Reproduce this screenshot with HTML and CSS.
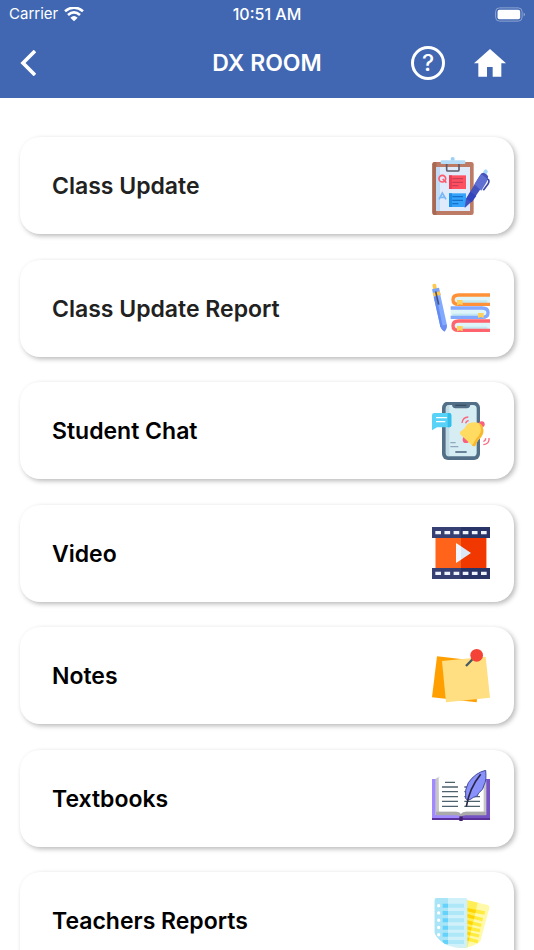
FILE: index.html
```html
<!DOCTYPE html>
<html lang="en">
<head>
    <meta charset="UTF-8">
    <meta name="viewport" content="width=device-width, initial-scale=1.0">
    <title>DX Room</title>
    <link rel="stylesheet" href="styles.css">
</head>
<body>
    <header class="header">
        <div class="status-bar">
            <div class="carrier">
                <span>Carrier</span>
                <svg class="wifi" viewBox="0 0 60 45" aria-hidden="true">
                    <path d="M3 13Q30-9 57 13M12 24Q30 8 48 24" fill="none" stroke="#fff" stroke-width="8"/>
                    <path d="M19 32Q30 22 41 32L30 43z" fill="#fff"/>
                </svg>
            </div>
            <span class="time">10:51 AM</span>
            <div class="battery-box">
                <svg class="battery" viewBox="0 0 96 45" aria-hidden="true">
                    <rect x="5" y="2" width="82" height="41" rx="12" fill="none" stroke="#8fa5d3" stroke-width="3"/>
                    <rect x="11" y="8" width="70" height="29" rx="6" fill="#fff"/>
                    <path d="M92 16q7 6 0 13z" fill="#9fb2da"/>
                </svg>
            </div>
        </div>
        <nav class="nav-bar">
            <div class="nav-side">
                <button type="button" class="nav-btn" aria-label="Back">
                    <svg class="back-icon" viewBox="0 0 48 78"><path d="M45 3L9 39l36 36" fill="none" stroke="#fff" stroke-width="11"/></svg>
                </button>
            </div>
            <h1 class="title">DX ROOM</h1>
            <div class="nav-side nav-right">
                <button type="button" class="nav-btn help" aria-label="Help">?</button>
                <button type="button" class="nav-btn home" aria-label="Home">
                    <svg class="home-icon" viewBox="0 0 96 84"><path d="M48 0L96 43H82V83H56V54H39V83H13V43H0z" fill="#fff"/></svg>
                </button>
            </div>
        </nav>
    </header>

    <main class="content">
        <ul class="menu">
            <li>
                <a class="card soft" href="#">
                    <span>Class Update</span>
                    <!-- clipboard with pen -->
                    <svg class="icon" viewBox="36 35 174 174" aria-hidden="true">
                        <rect x="37" y="50" width="124" height="159" rx="7" fill="#bd7b65"/>
                        <path d="M37 57q0-7 7-7h5v159h-5q-7 0-7-7z" fill="#a96851"/>
                        <rect x="48" y="65" width="102" height="132" fill="#dfeafb"/>
                        <path d="M48 65h12v132H48z" fill="#c1dbf7"/>
                        <path d="M80 56v17q0 4 4 4h29q4 0 4-4V56" fill="none" stroke="#5e5c69" stroke-width="5"/>
                        <circle cx="98" cy="41" r="6" fill="#9bcff6"/>
                        <rect x="62" y="45" width="74" height="11" rx="3" fill="#b5dcf8"/>
                        <circle cx="67" cy="100" r="10" fill="none" stroke="#ff5a6a" stroke-width="5"/>
                        <path d="M68 101l11 11" stroke="#ff5a6a" stroke-width="5"/>
                        <path d="M57 162l10-19 11 19M61 156h13" fill="none" stroke="#78b9f6" stroke-width="5"/>
                        <path d="M87 90h51v41H87z" fill="#ff5062"/>
                        <path d="M87 90h9v41h-9z" fill="#ee3c51"/>
                        <path d="M97 100h32M97 111h32M97 121h18" stroke="#c93d55" stroke-width="4"/>
                        <path d="M87 144h51v41H87z" fill="#35a3fb"/>
                        <path d="M87 144h9v41h-9z" fill="#198cec"/>
                        <path d="M97 154h32M97 165h32M97 175h18" stroke="#1670ca" stroke-width="4"/>
                        <path d="M189 80l6-8q7 0 9 7l-6 9z" fill="#a8d9fa"/>
                        <path d="M193 96l12 7q4 4-1 13l-14 19" fill="none" stroke="#3947a9" stroke-width="5"/>
                        <path d="M134 188l4-28 43-72q5-8 12-5l8 5q6 5 2 12l-46 67z" fill="#4453bd"/>
                        <path d="M163 117l15-24q6-8 12-2l10 8q4 5 0 11l-16 26z" fill="#6070d2"/>
                        <path d="M139 160l12-21 18 13-14 19z" fill="#3345bd"/>
                    </svg>
                </a>
            </li>
            <li>
                <a class="card soft" href="#">
                    <span>Class Update Report</span>
                    <!-- pen and pile of books -->
                    <svg class="icon" viewBox="36 30 174 174" aria-hidden="true">
                        <path d="M37 45q4-6 11-2l3 14-11 3z" fill="#ffc84c"/>
                        <path d="M36 58l21-5 5 22-21 4z" fill="#79a3fb"/>
                        <path d="M38 69l21-5 3 12-20 4z" fill="#ffc84c"/>
                        <path d="M41 80l20-5 20 91q0 10-7 18-9-4-13-14z" fill="#80a9ff"/>
                        <path d="M41 80l8-2 20 96-8-5z" fill="#658af0"/>
                        <path d="M60 168l20-4q2 12-7 21-9-6-13-17z" fill="#698df0"/>
                        <path d="M47 64l9 40" stroke="#46527c" stroke-width="5"/>
                        <path d="M210 76h-96q-15 0-15 14t15 14h96z" fill="#def5fa"/>
                        <path d="M115 91h87v10h-87z" fill="#c2e8f2"/>
                        <path d="M210 75h-94q-17 0-17 14t17 14h94" fill="none" stroke="#ff9138" stroke-width="10"/>
                        <path d="M92 114h90q15 0 15 14t-15 14H92z" fill="#def5fa"/>
                        <path d="M97 131h91v9H97z" fill="#c2e8f2"/>
                        <path d="M92 114h94q18 0 18 14t-18 14H92" fill="none" stroke="#82a8ff" stroke-width="10"/>
                        <path d="M210 153h-95q-16 0-16 14t16 14h95z" fill="#def5fa"/>
                        <path d="M115 170h87v9h-87z" fill="#c2e8f2"/>
                        <path d="M210 153h-94q-17 0-17 14t17 14h94" fill="none" stroke="#ff636e" stroke-width="10"/>
                        <path d="M111 90h17v16l-8-3-9 3zM174 129h17v15l-8-3-9 3zM111 168h17v16l-8-3-9 3z" fill="#ffd15c"/>
                    </svg>
                </a>
            </li>
            <li>
                <a class="card" href="#">
                    <span>Student Chat</span>
                    <!-- phone with bell -->
                    <svg class="icon" viewBox="36 29 174 174" aria-hidden="true">
                        <rect x="66" y="28" width="114" height="175" rx="18" fill="#526f87"/>
                        <path d="M88 38h8q2 10 10 10h35q8 0 10-10h8q11 0 11 11v132q0 11-11 11H88q-11 0-11-11V49q0-11 11-11z" fill="#d7edf4"/>
                        <path d="M78 47q1-9 10-9v154q-10-1-10-10z" fill="#c1dce6"/>
                        <path d="M106 39h33" stroke="#394f62" stroke-width="4"/>
                        <path d="M106 179h34" stroke="#536f87" stroke-width="5"/>
                        <path d="M91 151h16M91 163h24" stroke="#8ea9bd" stroke-width="4"/>
                        <path d="M43 62h45q6 0 6 6v31q0 6-6 6H51l-15 9V69q0-7 7-7z" fill="#58d2f7"/>
                        <path d="M83 62h5q6 0 6 6v31q0 6-6 6h-5z" fill="#33bdeb"/>
                        <path d="M48 76h33M48 88h28" stroke="#fff" stroke-width="4"/>
                        <circle cx="138" cy="142" r="10" fill="#f7617d"/>
                        <circle cx="185" cy="96" r="9" fill="#f7617d"/>
                        <!-- bell -->
                        <path d="M120 119q6-4 14-11 5-13 17-17 19-4 32 5 9 10 7 26-3 12-15 21-5 7-10 18-5 3-10-3l-33-31q-4-5-2-8z" fill="#ffdb61"/>
                        <path d="M176 92q13 4 14 21 1 16-15 30-5 8-9 17-5 4-11-2 6-3 9-12 4-8 11-14 15-18 1-40z" fill="#f8b82f"/>
                        <path d="M126 92q2-17 19-18M137 93q1-7 9-8M207 137q2 18-17 20M197 138q0 8-7 9" fill="none" stroke="#fa687f" stroke-width="4"/>
                    </svg>
                </a>
            </li>
            <li>
                <a class="card" href="#">
                    <span>Video</span>
                    <!-- film strip -->
                    <svg class="icon" viewBox="36 30 174 174" aria-hidden="true">
                        <path d="M45 66h156v96H45z" fill="#ffb08a"/>
                        <path d="M48 66h75v96H48z" fill="#ff641a"/>
                        <path d="M123 66h75v96h-75z" fill="#f03800"/>
                        <path d="M36 36h87v33H36zM36 159h87v33H36z" fill="#364073"/>
                        <path d="M123 36h87v33h-87zM123 159h87v33h-87z" fill="#293467"/>
                        <path d="M46 53h154M46 175h154" stroke="#edf2fb" stroke-width="10" stroke-dasharray="17 10.4"/>
                        <path d="M108 84v60l15-10V94z" fill="#f0f6ff"/>
                        <path d="M123 94l30 20-30 20z" fill="#dce7f8"/>
                    </svg>
                </a>
            </li>
            <li>
                <a class="card" href="#">
                    <span>Notes</span>
                    <!-- pinned notes -->
                    <svg class="icon" viewBox="36 29 174 174" aria-hidden="true">
                        <path d="M51 57l131 15-12 123L36 180z" fill="#ffa000"/>
                        <path d="M66 71l131-13 13 123-132 14z" fill="#ffdf82"/>
                        <path d="M138 86l26-27" stroke="#455a64" stroke-width="7"/>
                        <circle cx="170" cy="54" r="19" fill="#f44336"/>
                    </svg>
                </a>
            </li>
            <li>
                <a class="card" href="#">
                    <span>Textbooks</span>
                    <!-- open book with quill -->
                    <svg class="icon" viewBox="36 39 174 174" aria-hidden="true">
                        <path d="M36 66h87v120H36z" fill="#a18aff"/>
                        <path d="M123 66h87v120h-87z" fill="#7653c5"/>
                        <path d="M36 183h174v6H36z" fill="#5b329a"/>
                        <path d="M46 66l11-7h62v115H46zM127 174V67h62l10 3v104z" fill="#c6c6c6"/>
                        <path d="M56 59q5 7 12 7h46q9 0 9 8v99q-4-9-15-9H57z" fill="#fff"/>
                        <path d="M123 75q0-9 10-9h50q6 0 8-4v102h-53q-12 0-15 9z" fill="#fff"/>
                        <path d="M58 52h130v23H68q-10-4-10-16z" fill="#fff"/>
                        <path d="M48 164h60q12 0 15 9 3-9 15-9h59v11h-60q-9 0-14 6-5-6-14-6H48z" fill="#aaa"/>
                        <path d="M118 178h10v14h-10z" fill="#43216b"/>
                        <path d="M75 76h30M66 90h48M66 104h48M66 119h48M66 133h48M66 148h48M133 90h47M133 104h47M133 119h47M133 133h47M133 148h47" stroke="#4d626c" stroke-width="4"/>
                        <path d="M197 40q-31 7-52 37-12 21-8 48 8 9 23-4 14-1 16-13 15-10 16-24 8-12 5-44z" fill="#8991fa" stroke="#454b9f" stroke-width="3"/>
                        <path d="M182 52q-34 42-43 97" fill="none" stroke="#292645" stroke-width="5"/>
                    </svg>
                </a>
            </li>
            <li>
                <a class="card" href="#">
                    <span>Teachers Reports</span>
                    <!-- report sheets -->
                    <svg class="icon" viewBox="36 36 174 174" aria-hidden="true">
                        <clipPath id="sheets"><path d="M36 34h174v96a87 74 0 0 1-174 0z"/></clipPath>
                        <g clip-path="url(#sheets)">
                            <path d="M128 57l75 18q7 2 5 9l-34 126h-60z" fill="#fff9a9"/>
                            <path d="M128 57l45 11-31 137h-26z" fill="#ffee55"/>
                            <path d="M134 87l60 12M134 105l54 14M134 124l50 12M134 142l46 10M134 158l43 10M134 175l40 10" stroke="#ffec3f" stroke-width="10"/>
                            <path d="M134 87l33 8M134 105l29 8M134 124l24 6M134 142l20 5M134 158l17 4M134 175l13 4" stroke="#ffd400" stroke-width="10"/>
                            <rect x="44" y="54" width="98" height="165" rx="6" fill="#d0f1fa"/>
                            <path d="M50 54h34v165H44V60q0-6 6-6z" fill="#a9e5f7"/>
                            <path d="M68 77h64M68 99h64M68 121h64M68 143h64M68 164h64M68 186h64" stroke="#aee7f8" stroke-width="12"/>
                            <path d="M68 77h16M68 99h16M68 121h16M68 143h16M68 164h16M68 186h16" stroke="#65d2fb" stroke-width="12"/>
                            <path d="M56 77v110" stroke="#fff" stroke-width="10" stroke-linecap="round" stroke-dasharray="0 21.8"/>
                        </g>
                    </svg>
                </a>
            </li>
        </ul>
    </main>
</body>
</html>
```

FILE: styles.css
```css
* {
    box-sizing: border-box;
}

body {
    font-family: Inter, "Liberation Sans", sans-serif;
    margin: 0;
    height: 100vh;
    display: flex;
    flex-direction: column;
    background: #fff;
}

.header {
    flex: none;
    color: #fff;
    background: #4167b2;
}

/* status bar */
.status-bar {
    display: flex;
    align-items: center;
    height: 28px;
    padding: 0 9px;
    font-size: 15px;
    line-height: 20px;
}

.carrier,
.battery-box {
    flex: 1;
    display: flex;
    align-items: center;
    gap: 6px;
}

.battery-box {
    justify-content: flex-end;
}

.time {
    font-size: 16px;
    font-weight: 500;
}

.wifi {
    width: 20px;
    height: 15px;
}

.battery {
    width: 31px;
    height: 15px;
}

/* nav bar */
.nav-bar {
    display: flex;
    align-items: center;
    height: 70px;
    padding: 0 20px;
}

.nav-side {
    flex: 1;
    display: flex;
    align-items: center;
}

.nav-right {
    justify-content: flex-end;
    gap: 21px;
}

.nav-btn {
    display: flex;
    align-items: center;
    justify-content: center;
    padding: 0;
    border: 0;
    background: none;
    color: #fff;
    font-family: inherit;
    cursor: pointer;
}

.help {
    width: 34px;
    height: 34px;
    border: 3px solid #fff;
    border-radius: 50%;
    font-size: 23px;
    font-weight: 500;
    line-height: 28px;
}

.home {
    padding: 0 8px;
}

.back-icon {
    width: 16px;
    height: 26px;
}

.home-icon {
    width: 32px;
    height: 28px;
}

.title {
    margin: 0;
    font-size: 23px;
    font-weight: 600;
    line-height: 28px;
}

/* menu */
.content {
    flex: 1;
    min-height: 0;
    overflow-y: auto;
    scrollbar-width: none;
}

.menu {
    list-style: none;
    margin: 0;
    padding: 39px 20px 26px;
}

.menu li {
    margin-bottom: 26px;
}

.menu li:nth-child(even) {
    margin-bottom: 25px;
}

.card {
    display: flex;
    align-items: center;
    justify-content: space-between;
    min-height: 97px;
    padding: 0 24px 0 32px;
    border-radius: 20px;
    background: #fff;
    box-shadow: 2px 2px 5px rgba(0, 0, 0, 0.28);
    color: #000;
    font-size: 23px;
    font-weight: 600;
    line-height: 28px;
    text-decoration: none;
}

.soft {
    color: #212121;
}

.icon {
    flex: none;
    width: 58px;
    height: 58px;
}
```
